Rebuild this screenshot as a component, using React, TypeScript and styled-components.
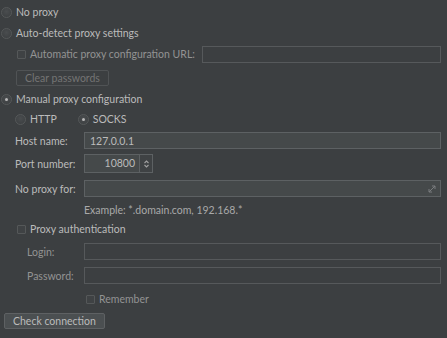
import React from "react";
import styled, { createGlobalStyle } from "styled-components";

const Global = createGlobalStyle`
  html, body { margin: 0; padding: 0; background: #3c3f41; }
  body { font-family: Lato, "Open Sans", sans-serif; font-size: 10.5px; color: #bbbbbb; }
`;

const Panel = styled.div`
  width: 447px;
  height: 338px;
  background: #3c3f41;
  display: flex;
  flex-direction: column;
  overflow: hidden;
`;

const Row = styled.div<{ $top: number; $left: number; $h?: number; $gap?: number }>`
  display: flex;
  align-items: center;
  height: ${(p) => p.$h ?? 18}px;
  margin-top: ${(p) => p.$top}px;
  padding-left: ${(p) => p.$left}px;
  padding-right: 6px;
  gap: ${(p) => p.$gap ?? 4}px;
  flex-shrink: 0;
`;

const Label = styled.span<{ $dim?: boolean; $w?: number }>`
  color: ${(p) => (p.$dim ? "#939393" : "#bbbbbb")};
  white-space: nowrap;
  ${(p) => (p.$w ? `width: ${p.$w}px; flex-shrink: 0;` : "")}
`;

const RadioCircle = styled.span<{ $on?: boolean }>`
  width: 9px;
  height: 9px;
  border-radius: 50%;
  border: 1px solid #555859;
  background: radial-gradient(circle at 50% 40%, #4a4d4f, #3a3d3f);
  display: inline-flex;
  align-items: center;
  justify-content: center;
  flex-shrink: 0;
  &::after {
    content: "";
    width: 3px;
    height: 3px;
    border-radius: 50%;
    background: ${(p) => (p.$on ? "#b8b8b8" : "transparent")};
  }
`;

const Check = styled.span`
  width: 7px;
  height: 7px;
  border: 1px solid #555859;
  background: #3f4244;
  flex-shrink: 0;
  border-radius: 1px;
  margin-left: 1px;
`;

const Field = styled.div<{ $filled?: boolean }>`
  height: 15px;
  flex: 1;
  border: 1px solid ${(p) => (p.$filled ? "#5d6163" : "#56595b")};
  background: ${(p) => (p.$filled ? "#45494a" : "#3c3f41")};
  display: flex;
  align-items: center;
  padding: 0 5px;
  color: #bbbbbb;
  position: relative;
  box-sizing: content-box;
`;

const Button = styled.div<{ $dim?: boolean }>`
  height: 14px;
  border: 1px solid ${(p) => (p.$dim ? "#505355" : "#5e6163")};
  background: ${(p) => (p.$dim ? "#3c3f41" : "#4b4f51")};
  color: ${(p) => (p.$dim ? "#747474" : "#bbbbbb")};
  padding: 0 8px;
  display: flex;
  align-items: center;
  border-radius: 2px;
  white-space: nowrap;
`;

const SpinBox = styled.div`
  display: flex;
  height: 17px;
  border: 1px solid #5d6163;
  background: #45494a;
`;

const SpinValue = styled.div`
  width: 50px;
  text-align: right;
  padding-right: 4px;
  line-height: 17px;
`;

const SpinArrows = styled.div`
  width: 12px;
  border-left: 1px solid #5d6163;
  display: flex;
  align-items: center;
  justify-content: center;
  background: #3f4244;
`;

const Corner = styled.svg`
  position: absolute;
  right: 4px;
  top: 4px;
`;

const Example = styled.span`
  color: #a9a9a9;
  white-space: nowrap;
`;

export default function App() {
  return (
    <Panel>
      <Global />
      <Row $top={3} $left={1}>
        <RadioCircle />
        <Label>No proxy</Label>
      </Row>
      <Row $top={3} $left={1}>
        <RadioCircle />
        <Label>Auto-detect proxy settings</Label>
      </Row>
      <Row $top={3} $left={16}>
        <Check />
        <Label $dim>Automatic proxy configuration URL:</Label>
        <Field style={{ marginLeft: 3 }} />
      </Row>
      <Row $top={6} $left={16} $h={17}>
        <Button $dim>Clear passwords</Button>
      </Row>
      <Row $top={4} $left={1}>
        <RadioCircle $on />
        <Label>Manual proxy configuration</Label>
      </Row>
      <Row $top={2} $left={15}>
        <RadioCircle />
        <Label style={{ marginRight: 17 }}>HTTP</Label>
        <RadioCircle $on />
        <Label>SOCKS</Label>
      </Row>
      <Row $top={4} $left={15} $h={17}>
        <Label $w={65}>Host name:</Label>
        <Field $filled>127.0.0.1</Field>
      </Row>
      <Row $top={6} $left={15} $h={17}>
        <Label $w={65}>Port number:</Label>
        <SpinBox>
          <SpinValue>10800</SpinValue>
          <SpinArrows>
            <svg width="7" height="10" viewBox="0 0 7 10">
              <path d="M1.5 4 L3.5 2 L5.5 4" stroke="#a0a0a0" fill="none" strokeWidth="1.1" />
              <path d="M1.5 6 L3.5 8 L5.5 6" stroke="#a0a0a0" fill="none" strokeWidth="1.1" />
            </svg>
          </SpinArrows>
        </SpinBox>
      </Row>
      <Row $top={8} $left={15} $h={17}>
        <Label $w={65}>No proxy for:</Label>
        <Field $filled>
          <Corner width="8" height="8" viewBox="0 0 8 8">
            <path d="M1 7 L7 1 M4 1 H7 V4 M1 4 V7 H4" stroke="#7a7d7f" fill="none" strokeWidth="1" />
          </Corner>
        </Field>
      </Row>
      <Row $top={4} $left={84}>
        <Example>Example: *.domain.com, 192.168.*</Example>
      </Row>
      <Row $top={1} $left={16}>
        <Check />
        <Label>Proxy authentication</Label>
      </Row>
      <Row $top={5} $left={27} $h={17}>
        <Label $dim $w={53}>Login:</Label>
        <Field />
      </Row>
      <Row $top={7} $left={27} $h={17}>
        <Label $dim $w={53}>Password:</Label>
        <Field />
      </Row>
      <Row $top={6} $left={85}>
        <Check />
        <Label $dim>Remember</Label>
      </Row>
      <Row $top={4} $left={4} $h={17}>
        <Button>Check connection</Button>
      </Row>
    </Panel>
  );
}
